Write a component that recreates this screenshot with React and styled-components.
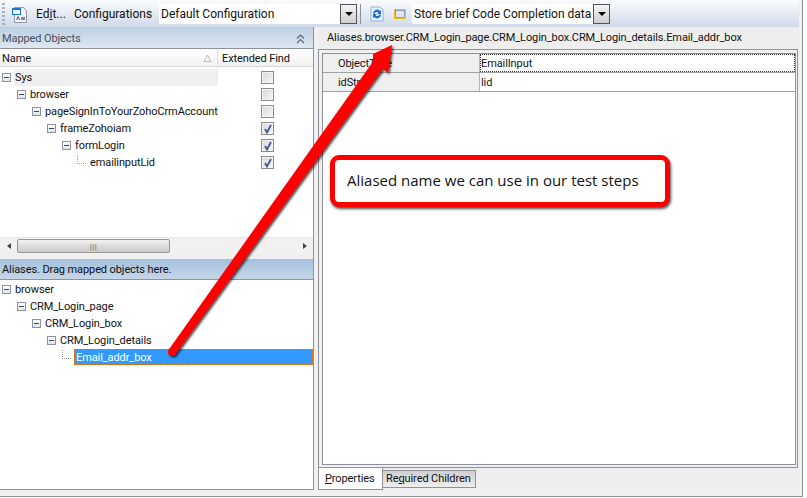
import React from "react";
import styled, { createGlobalStyle } from "styled-components";

const UI = `"Roboto", "Liberation Sans", Arial, sans-serif`;

const Global = createGlobalStyle`
  html, body { margin: 0; padding: 0; background: #fff; }
  body { font-family: ${UI}; font-size: 11px; letter-spacing: -0.1px; color: #111; }
`;

const Page = styled.div`
  position: relative; width: 807px; height: 498px; overflow: hidden; background: #fff;
`;
const Window = styled.div`
  width: 803px; height: 497px; box-sizing: border-box; background: #f0f0f0;
  border-right: 1px solid #8f929c; border-bottom: 1px solid #8f929c;
  display: flex; flex-direction: column;
`;
const Toolbar = styled.div`
  height: 27px; flex: none; display: flex; align-items: center; box-sizing: border-box;
  padding-left: 2px; width: 799px; background: linear-gradient(#fafbfd, #eef2f8 30%, #cfd9e8);
`;
const Gripper = styled.div`
  width: 3px; height: 22px; margin-right: 6px;
  background: repeating-linear-gradient(#a8b0bc 0 2px, transparent 2px 4px);
`;
const ToolLabel = styled.span`
  font-size: 12px; letter-spacing: 0; width: ${p => p.$w}px; margin-left: ${p => p.$ml || 0}px; flex: none; white-space: nowrap;
  u { text-decoration-thickness: 1px; }
`;
const Combo = styled.div`
  width: ${p => p.$w}px; height: 20px; margin-left: ${p => p.$ml || 0}px; background: #fff; display: flex; flex: none;
  align-items: center; box-sizing: border-box; padding-left: 2px; font-size: 12px; letter-spacing: 0; white-space: nowrap;
`;
const DropButton = styled.div`
  width: 17px; height: 20px; flex: none; box-sizing: border-box; border: 1px solid #555; background: linear-gradient(#f4f4f4, #cfcfcf);
  display: flex; align-items: center; justify-content: center;
  &::after { content: ""; border: 4px solid transparent; border-top: 4px solid #000; border-bottom: 0; }
`;
const Sep = styled.div`width: 1px; height: 20px; background: #8a919b; margin: 0 9px 0 3px;`;
const Body = styled.div`flex: 1; display: flex; min-height: 0;`;
const Left = styled.div`
  width: 314px; flex: none; height: 463px; display: flex; flex-direction: column; box-sizing: border-box;
  border-right: 1px solid #8f929c; border-bottom: 1px solid #8f929c;
`;
const PanelTitle = styled.div`
  height: ${p => p.$h}px; flex: none; box-sizing: border-box; display: flex; align-items: center; justify-content: space-between;
  padding: ${p => p.$dim ? 2 : 1}px 8px 0 2px; font-size: 11px; color: ${p => p.$dim ? "#44505c" : "#111"};
  background: ${p => p.$dim ? "linear-gradient(#bccfe2, #dfe7f1)" : "linear-gradient(#a5c1de, #c5d6e8)"};
  border-bottom: 1px solid #8f929c;
`;
const Mapped = styled.div`height: 205px; flex: none; background: #fff; display: flex; flex-direction: column;`;
const Head = styled.div`
  display: grid; grid-template-columns: 218px 1fr; height: 18px; box-sizing: border-box; flex: none; background: linear-gradient(#fff, #f2f2f2);
  border-bottom: 1px solid #d8d8d8; font-size: 11px; line-height: 20px;
`;
const HeadCell = styled.div`
  padding-left: ${p => p.$pl}px; border-right: ${p => p.$line ? "1px solid #e0e0e0" : "0"};
  display: flex; justify-content: space-between; padding-right: 5px;
`;
const Rows = styled.div`padding-top: 2px; display: flex; flex-direction: column;`;
const Row = styled.div`height: 17px; display: grid; grid-template-columns: 218px 1fr; align-items: center;`;
const NameCell = styled.div`
  display: flex; align-items: center; height: 17px; padding-left: ${p => p.$d * 15 + 2}px;
  background: ${p => p.$hl ? "linear-gradient(90deg, #fff 14px, #f0f0f0 14px)" : "none"}; white-space: nowrap;
`;
const Expander = styled.span`
  width: 9px; height: 9px; box-sizing: border-box; border: 1px solid #8a93a2; background: linear-gradient(#fff, #dfe3ea);
  flex: none; margin-right: 4px; position: relative;
  &::after { content: ""; position: absolute; left: 1px; right: 1px; top: 3px; height: 1px; background: #3c4656; }
`;
const Leaf = styled.span`
  width: 9px; height: 9px; flex: none; margin-right: 4px; box-sizing: border-box;
  border-left: 1px dotted #999; border-bottom: 1px dotted #999; transform: translateY(-3px);
`;
const CheckCell = styled.div`display: flex; justify-content: center; padding-left: 4px;`;
const Check = styled.span`
  width: 13px; height: 13px; box-sizing: border-box; border: 1px solid #8c8c8c; background: linear-gradient(135deg, #d8d8d8, #f7f7f7);
  box-shadow: inset 0 0 0 1px #f4f4f4; display: flex; align-items: center; justify-content: center;
  svg { display: block; }
`;
const Spacer = styled.div`flex: 1;`;
const Scrollbar = styled.div`
  height: 17px; flex: none; background: #f1f1f1; display: flex; align-items: center; border-top: 1px solid #e8e8e8; box-sizing: border-box;
`;
const ScrollArrow = styled.span`
  width: 17px; flex: none; display: flex; justify-content: center;
  &::after { content: ""; border: 3.5px solid transparent; ${p => p.$right ? "border-left: 4px solid #444; border-right: 0;" : "border-right: 4px solid #444; border-left: 0;"} }
`;
const Thumb = styled.span`
  width: 153px; height: 14px; box-sizing: border-box; border: 1px solid #979797; border-radius: 2px;
  background: linear-gradient(#f3f3f3, #dcdcdc 50%, #cdcdcd); display: flex; align-items: center; justify-content: center;
  color: #555; font-size: 8px; letter-spacing: 0.5px;
`;
const ScrollTrack = styled.span`flex: 1;`;
const Gap = styled.div`height: 5px; flex: none; background: #f0f0f0;`;
const AliasTree = styled.div`flex: 1; background: #fff; padding-top: 1px;`;
const AliasRow = styled.div`
  display: flex; align-items: center; height: 17px; padding-left: ${p => p.$d * 15 + 2}px;
`;
const Selected = styled.span`
  flex: 1; height: 16px; box-sizing: border-box; background: #3399ff; color: #fff; border: 1px dotted #d8781a;
  margin: 0 0 2px -1px; padding-left: 1px; line-height: 15px;
`;
const Right = styled.div`margin-left: 4px; width: 481px; flex: none; display: flex; flex-direction: column; height: 463px;`;
const PathBar = styled.div`
  height: 22px; flex: none; background: #eeeeee; padding-left: 9px; box-sizing: border-box;
  line-height: 21px; white-space: nowrap;
`;
const Frame = styled.div`
  width: 480px; height: 419px; flex: none; box-sizing: border-box; border: 1px solid #8f929c; padding: 3px 1px 2px 3px;
`;
const Grid = styled.div`
  height: 100%; box-sizing: border-box; border: 1px solid #8f929c; background: #fff;
`;
const PropRow = styled.div`display: grid; grid-template-columns: 157px 1fr; height: 19px; border-bottom: 1px solid #a0a0a0; box-sizing: border-box;`;
const PropName = styled.div`background: #efefef; padding: 2px 0 0 15px; line-height: 16px; border-right: 1px solid #b5b5b5;`;
const PropValue = styled.div`
  padding: 2px 0 0 1px; line-height: 16px; outline: ${p => p.$focus ? "1px dotted #333" : "0"}; outline-offset: -1px;
`;
const Tabs = styled.div`
  display: flex; align-items: flex-start; height: 22px; background: #eeeeee; box-sizing: border-box;
`;
const Tab = styled.div`
  box-sizing: border-box; white-space: nowrap;
  ${p => p.$active
    ? `height: 22px; width: 65px; background: #fff; border: 1px solid #8f929c; border-top: 0; padding: 4px 0 0 6px;`
    : `margin-top: 2px; height: 18px; width: 93px; background: linear-gradient(#cfcfcf, #eeeeee); border: 1px solid #8f929c; border-left: 0; padding: 1px 0 0 3px;`}
`;
const Overlay = styled.svg`position: absolute; left: 0; top: 0; pointer-events: none;`;
const Callout = styled.div`
  position: absolute; left: 330px; top: 155px; width: 340px; height: 52px; box-sizing: border-box; background: #fff;
  border: 5px solid #ff0000; border-radius: 9px; box-shadow: 1px 2px 3px rgba(0,0,0,.7);
  font-family: "Open Sans", "Liberation Sans", sans-serif; font-size: 15px; letter-spacing: 0; line-height: 40px; padding-left: 12px; color: #111; white-space: nowrap;
`;

const Tick = () => (
  <svg width="10" height="10" viewBox="0 0 10 10"><path d="M2 5 L4 8.5 L8 1" fill="none" stroke="#46598f" strokeWidth="1.8" /></svg>
);
const mapped = [
  ["Sys", 0, false], ["browser", 1, false], ["pageSignInToYourZohoCrmAccount", 2, false],
  ["frameZohoiam", 3, true], ["formLogin", 4, true], ["emailinputLid", 5, true],
];
const aliases = [["browser", 0], ["CRM_Login_page", 1], ["CRM_Login_box", 2], ["CRM_Login_details", 3]];

export default function App() {
  return (
    <Page>
      <Global />
      <Window>
        <Toolbar>
          <Gripper />
          <svg width="17" height="18" viewBox="0 0 17 18">
            <path d="M3.500 2.500h9l3 3v12h-12z" fill="#f3f5f8" stroke="#8e99a8" />
            <rect x="1.500" y="3.500" width="8" height="6" fill="#e8f4ff" stroke="#1976c8" />
            <rect x="1" y="3" width="9" height="2" fill="#1976c8" />
            <rect x="10" y="12" width="4" height="3" fill="#7d8aa0" />
            <path d="M5.500 15l1.500-3.500 1.500 3.500" fill="none" stroke="#46536a" />
          </svg>
          <ToolLabel $ml={8} $w={38}>Ed<u>i</u>t...</ToolLabel>
          <ToolLabel $w={85}>Configurations</ToolLabel>
          <Combo $w={181}>Default Configuration</Combo>
          <DropButton />
          <Sep />
          <svg width="14" height="16" viewBox="0 0 14 16">
            <path d="M1 1h9l3 3v11H1z" fill="#eaf3fd" stroke="#8fb0d6" />
            <path d="M3 7a4 4 0 0 1 7-2l1-1v4H7l1.500-1.500A2.400 2.400 0 0 0 4.600 8z" fill="#1c6fd0" />
            <path d="M11 9a4 4 0 0 1-7 2l-1 1V8h4L5.500 9.500A2.400 2.400 0 0 0 9.400 8z" fill="#1c6fd0" />
          </svg>
          <svg width="12" height="10" viewBox="0 0 12 10" style={{ marginLeft: 10 }}>
            <rect x=".5" y=".5" width="11" height="9" fill="#e8eef7" stroke="#f0bd2c" />
            <rect x="1.500" y="1.500" width="9" height="7" fill="#dfe6f2" stroke="#55647f" strokeWidth=".6" />
          </svg>
          <Combo $w={181} $ml={6}>Store brief Code Completion data</Combo>
          <DropButton />
        </Toolbar>
        <Body>
          <Left>
            <PanelTitle $dim $h={22}>
              Mapped Objects
              <svg width="9" height="10" viewBox="0 0 9 10"><path d="M1 4.500l3.500-3.500 3.500 3.500M1 9l3.500-3.500L8 9" fill="none" stroke="#59636e" strokeWidth="1.100" /></svg>
            </PanelTitle>
            <Mapped>
              <Head>
                <HeadCell $pl={2} $line>
                  Name
                  <svg width="9" height="9" viewBox="0 0 9 9" style={{ marginTop: 5 }}><path d="M4.500 1L8 7.500H1z" fill="none" stroke="#b9b9b9" /></svg>
                </HeadCell>
                <HeadCell $pl={4}>Extended Find</HeadCell>
              </Head>
              <Rows>
                {mapped.map(([name, d, on], i) => (
                  <Row key={name}>
                    <NameCell $d={d} $hl={i === 0}>
                      {d === 5 ? <Leaf /> : <Expander />}
                      {name}
                    </NameCell>
                    <CheckCell><Check>{on && <Tick />}</Check></CheckCell>
                  </Row>
                ))}
              </Rows>
              <Spacer />
              <Scrollbar>
                <ScrollArrow />
                <Thumb>|||</Thumb>
                <ScrollTrack />
                <ScrollArrow $right />
              </Scrollbar>
            </Mapped>
            <Gap />
            <PanelTitle $h={21}>Aliases. Drag mapped objects here.</PanelTitle>
            <AliasTree>
              {aliases.map(([name, d]) => (
                <AliasRow key={name} $d={d}><Expander />{name}</AliasRow>
              ))}
              <AliasRow $d={4}><Leaf /><Selected>Email_addr_box</Selected></AliasRow>
            </AliasTree>
          </Left>
          <Right>
            <PathBar>Aliases.browser.CRM_Login_page.CRM_Login_box.CRM_Login_details.Email_addr_box</PathBar>
            <Frame>
              <Grid>
                <PropRow>
                  <PropName>ObjectType</PropName>
                  <PropValue $focus>EmailInput</PropValue>
                </PropRow>
                <PropRow>
                  <PropName>idStr</PropName>
                  <PropValue>lid</PropValue>
                </PropRow>
              </Grid>
            </Frame>
            <Tabs>
              <Tab $active><u>P</u>roperties</Tab>
              <Tab>Re<u>q</u>uired Children</Tab>
            </Tabs>
          </Right>
        </Body>
      </Window>
      <Overlay width="807" height="498" viewBox="0 0 807 498">
        <defs>
          <filter id="sh" x="-10%" y="-10%" width="120%" height="120%">
            <feDropShadow dx="1.500" dy="1.500" stdDeviation="1.200" floodColor="#000" floodOpacity=".75" />
          </filter>
        </defs>
        <g filter="url(#sh)">
          <circle cx="172" cy="352" r="4" fill="#ff0000" />
          <path d="M168.700 349.700 L373.100 61.500 L373 54 L392 45 L388 73 L383 68.500 L175.300 354.300 Z" fill="#ff0000" />
        </g>
      </Overlay>
      <Callout>Aliased name we can use in our test steps</Callout>
    </Page>
  );
}
